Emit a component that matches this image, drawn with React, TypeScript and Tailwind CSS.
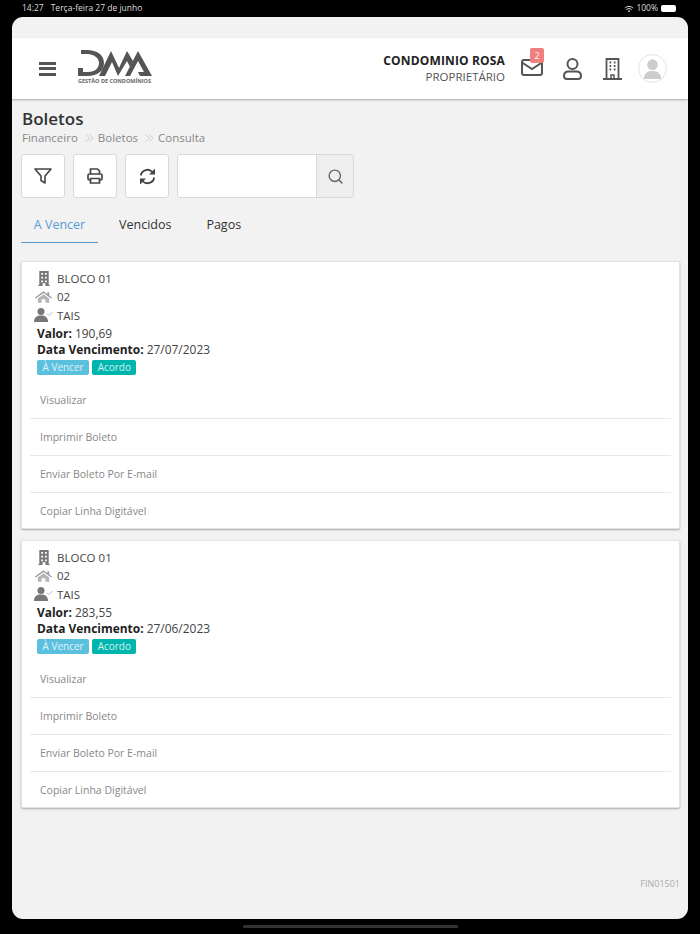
import React from "react";
import { Search } from "lucide-react";

const Boleto = ({ valor, vencimento }: { valor: string; vencimento: string }) => (
    <div className="bg-white rounded-[2px] border border-[#e4e2e2] shadow-[0_1px_2px_rgba(0,0,0,0.3)] pt-[7px] h-[268px]">
        <div className="pl-[12px] text-[11.5px] text-[#444]">
            <div className="flex items-center h-[18.5px]">
                <span className="w-[19px] flex justify-center">
                    <svg viewBox="0 0 12 16" className="w-[12px] h-[15px]">
                        <path fillRule="evenodd" fill="#777" d="M1 0h10v15h1v1H7.500v-3h-3v3H0v-1h1zM3 2v2h2V2zM7 2v2h2V2zM3 6v2h2V6zM7 6v2h2V6zM3 10v2h2v-2zM7 10v2h2v-2z" />
                    </svg>
                </span>
                <span className="ml-[4px]">BLOCO 01</span>
            </div>
            <div className="flex items-center h-[18.5px]">
                <span className="w-[19px] flex justify-center">
                    <svg viewBox="0 0 18 12" className="w-[17px] h-[12px]">
                        <path fill="#999" d="M9 0 0 6.500l.8 1L9 1.800l8.200 5.700.8-1-3-2.200V1h-2v2z" />
                        <path fill="#b5b5b5" d="M3 7.500 9 3.200l6 4.300V12h-4V8.500H7V12H3z" />
                    </svg>
                </span>
                <span className="ml-[4px]">02</span>
            </div>
            <div className="flex items-center h-[18.5px]">
                <span className="w-[19px] flex justify-center">
                    <svg viewBox="0 0 19 14" className="w-[19px] h-[14px]">
                        <circle cx="7" cy="3.600" r="3.500" fill="#777" />
                        <path fill="#777" d="M0 14c0-5 3-6.500 7-6.500s7 1.500 7 6.500z" />
                        <path fill="none" stroke="#bbb" strokeWidth="1" d="M13 5.500l2 2 3.500-3.500" />
                    </svg>
                </span>
                <span className="ml-[4px]">TAIS</span>
            </div>
        </div>
        <div className="pl-[15px] mt-[1px] text-[11.95px] text-[#444] leading-[16px]">
            <div>
                <b className="text-[#222] font-bold">Valor:</b> {valor}
            </div>
            <div>
                <b className="text-[#222] font-bold">Data Vencimento:</b> {vencimento}
            </div>
        </div>
        <div className="pl-[15px] flex gap-[3px] mt-[2px] text-[10px] leading-[15px] text-white/80">
            <span className="bg-[#5bc0de] rounded-[2px] px-[5.500px] h-[15px]">À Vencer</span>
            <span className="bg-[#00b5ad] rounded-[2px] px-[5.500px] h-[15px]">Acordo</span>
        </div>
        <div className="mx-[8px] mt-[8px] text-[10.5px] text-[#888]">
            {["Visualizar", "Imprimir Boleto", "Enviar Boleto Por E-mail", "Copiar Linha Digitável"].map((t, i) => (
                <div
                    key={t}
                    className={`h-[36.7px] flex items-center pl-[10px] pt-[2px] ${i < 3 ? "border-b border-[#e8e8e8]" : ""}`}
                >
                    {t}
                </div>
            ))}
        </div>
    </div>
);

const ToolBtn = ({ children }: { children: React.ReactNode }) => (
    <button className="w-[44px] h-[44px] bg-white border border-[#d9d9d9] rounded-[3px] flex items-center justify-center text-[#444]">
        {children}
    </button>
);

const Crumb = () => (
    <svg viewBox="0 0 9 8" className="w-[9px] h-[8px] ml-[7px] mr-[4px]" fill="none" stroke="#ccc" strokeWidth="1">
        <path d="M1 0.500 4.500 4 1 7.500M4.500 0.500 8 4 4.500 7.500" />
    </svg>
);

export default function App() {
    return (
        <div className="w-[700px] h-[934px] bg-black flex flex-col overflow-hidden font-['Open_Sans',sans-serif]">
            {/* Status bar */}
            <div className="h-[17px] shrink-0 pl-[22px] pr-[24px] flex items-center justify-between text-[8.500px] text-[#ddd]">
                <div className="flex gap-[7px]">
                    <span>14:27</span>
                    <span>Terça-feira 27 de junho</span>
                </div>
                <div className="flex items-center gap-[2px]">
                    <svg viewBox="0 0 12 9" className="w-[10px] h-[8px]" fill="none" stroke="#ddd" strokeWidth="1.2">
                        <path d="M1 3.5c3-2.8 7-2.8 10 0M2.800 5.300c2-1.700 4.400-1.700 6.400 0" />
                        <path d="M6 8.500 4.500 6.800c1-.7 2-.7 3 0z" fill="#ddd" stroke="none" />
                    </svg>
                    <span>100%</span>
                    <span className="w-[15px] h-[7px] rounded-[2px] bg-white ml-[1px]" />
                </div>
            </div>

            {/* Screen */}
            <div className="mx-[12px] w-[676px] h-[902px] shrink-0 bg-[#f2f2f2] rounded-[11px] overflow-hidden flex flex-col">
                <div className="h-[21px] shrink-0" />
                <header className="h-[61px] shrink-0 bg-white shadow-[0_1px_2px_rgba(0,0,0,0.3)] flex items-center pl-[27px] pr-[21px]">
                    <div className="w-[17px] h-[14px] flex flex-col justify-between">
                        <span className="h-[3px] bg-[#555]" />
                        <span className="h-[3px] bg-[#555]" />
                        <span className="h-[3px] bg-[#555]" />
                    </div>
                    <div className="ml-[22px] w-[74px] flex flex-col -mt-[3px]">
                        <svg viewBox="0 0 74 26" className="w-[74px] h-[26px]">
                            <path fill="#555" d="M3 0h6c10 0 17 5 17 13s-7 13-16 13H0v-8h5v4h5c7 0 11-4 11-9s-5-9-12-9H3z" />
                            <path fill="#555" d="M21 26 33 1l8 17 8-17 6 10-3 6-3-6-9 15-6-14-7 14z" />
                            <path fill="#555" d="M47 26 60 1l14 25H62l-2-4h6l-6-11-8 15z" />
                        </svg>
                        <span className="text-[5.500px] leading-[7px] mt-[2px] font-bold text-[#666] whitespace-nowrap">GESTÃO DE CONDOMÍNIOS</span>
                    </div>
                    <div className="ml-auto text-right leading-[16px]">
                        <div className="text-[12px] font-bold text-[#222] tracking-[0.15px]">CONDOMINIO ROSA</div>
                        <div className="text-[11.500px] text-[#555]">PROPRIETÁRIO</div>
                    </div>
                    <div className="relative ml-[16px] w-[22px] h-[17px] mt-[-2px]">
                        <svg viewBox="0 0 22 17" className="w-[22px] h-[17px]" fill="none" stroke="#555" strokeWidth="2">
                            <rect x="1" y="1" width="20" height="15" rx="2" />
                            <path d="M1 3.500 11 10l10-6.500" />
                        </svg>
                        <span className="absolute -top-[11px] right-[-1px] w-[14px] h-[15px] bg-[#f08080] rounded-[2px] text-[9px] leading-[15px] text-center text-white/90">2</span>
                    </div>
                    <svg viewBox="0 0 19 22" className="ml-[20px] w-[19px] h-[22px]" fill="none" stroke="#555" strokeWidth="2">
                        <circle cx="9.500" cy="6" r="5" />
                        <path d="M1 18c0-3 2-4.500 4.500-4.500h8c2.500 0 4.500 1.500 4.500 4.500 0 2-1 3-3 3H4c-2 0-3-1-3-3z" />
                    </svg>
                    <svg viewBox="0 0 19 22" className="ml-[21px] w-[19px] h-[22px]" fill="none" stroke="#555" strokeWidth="1.800">
                        <path d="M3.500 21V1h12v20M0 21h19" />
                        <path d="M8 21v-4h3v4" strokeWidth="1.500" />
                        <path d="M6.500 4.500h1.700M10.800 4.500h1.700M6.500 8h1.700M10.800 8h1.700M6.500 11.500h1.700M10.800 11.500h1.700" strokeWidth="2" />
                    </svg>
                    <div className="ml-[16px] w-[29px] h-[29px] rounded-full border border-[#e2e2e2] bg-white flex items-center justify-center overflow-hidden">
                        <svg viewBox="0 0 28 28" className="w-[27px] h-[27px]">
                            <circle cx="14" cy="10" r="5.500" fill="#ccc" />
                            <path fill="#ccc" d="M5 25c0-6 4-8.500 9-8.500s9 2.500 9 8.500z" />
                        </svg>
                    </div>
                </header>

                <main className="flex-1 flex flex-col px-[9px] relative">
                    <h1 className="ml-[1px] mt-[8px] text-[17px] leading-[23px] font-semibold text-[#333]">Boletos</h1>
                    <div className="ml-[1px] flex items-center text-[11.5px] leading-[16px] text-[#888]">
                        <span>Financeiro</span>
                        <Crumb />
                        <span>Boletos</span>
                        <Crumb />
                        <span>Consulta</span>
                    </div>
                    <div className="flex gap-[8px] mt-[8px]">
                        <ToolBtn>
                            <svg viewBox="0 0 18 16" className="w-[18px] h-[16px]" fill="none" stroke="#444" strokeWidth="1.600" strokeLinejoin="round">
                                <path d="M1 1h16l-6 7v7l-4-2.500V8z" />
                            </svg>
                        </ToolBtn>
                        <ToolBtn>
                            <svg viewBox="0 0 16 16" className="w-[16px] h-[16px]" fill="none" stroke="#444" strokeWidth="1.700">
                                <path d="M3.500 6V1h7l2 2v3" />
                                <rect x="1" y="6" width="14" height="6" rx="1.500" />
                                <path d="M3.500 10.500V15h9v-4.500z" fill="#fff" />
                            </svg>
                        </ToolBtn>
                        <ToolBtn>
                            <svg viewBox="0 0 17 17" className="w-[17px] h-[17px]" fill="none" stroke="#444" strokeWidth="1.800">
                                <path d="M1.800 7.500A6.800 6.800 0 0 1 13.500 4M15.200 9.500A6.800 6.800 0 0 1 3.500 13" />
                                <path d="M16 0.500V6.500H10zM1 16.500V10.500H7z" fill="#444" stroke="none" />
                            </svg>
                        </ToolBtn>
                        <div className="flex w-[177px] h-[44px] border border-[#d9d9d9] rounded-[3px] overflow-hidden">
                            <div className="flex-1 bg-white" />
                            <div className="w-[37px] bg-[#eee] border-l border-[#d9d9d9] flex items-center justify-center">
                                <Search className="w-[17px] h-[17px] text-[#666]" />
                            </div>
                        </div>
                    </div>
                    <nav className="flex mt-[7px] text-[12.500px] text-[#333] h-[38px]">
                        <div className="w-[77px] text-center text-[#5b9bd5] border-b border-[#5b9bd5] pt-[11px]">A Vencer</div>
                        <div className="ml-[21px] pt-[11px]">Vencidos</div>
                        <div className="ml-[35px] pt-[11px]">Pagos</div>
                    </nav>
                    <div className="mt-[18px] flex flex-col gap-[11px] w-[659px]">
                        <Boleto valor="190,69" vencimento="27/07/2023" />
                        <Boleto valor="283,55" vencimento="27/06/2023" />
                    </div>
                    <div className="absolute right-[8px] bottom-[29px] text-[9px] text-[#aaa]">FIN01501</div>
                </main>
            </div>

            {/* Home indicator */}
            <div className="flex-1 flex items-center justify-center">
                <div className="w-[215px] h-[3px] rounded-full bg-[#333]" />
            </div>
        </div>
    );
}
